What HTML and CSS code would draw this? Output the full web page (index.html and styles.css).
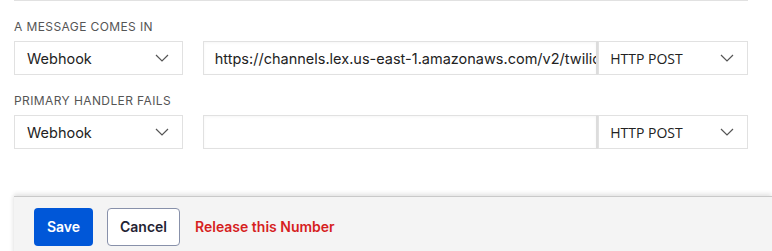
FILE: index.html
```html
<!DOCTYPE html>
<html>
<head>
<meta charset="utf-8">
<link rel="stylesheet" href="styles.css">
</head>
<body>
<div class="page">
  <div class="form">
    <div class="label">A message comes in</div>
    <div class="row">
      <div class="select type">
        <span>Webhook</span>
        <svg class="chev" width="14" height="8" viewBox="0 0 14 8"><path d="M1 1l6 6 6-6" fill="none" stroke="#555" stroke-width="1.2"/></svg>
      </div>
      <input class="input" type="text" value="https://channels.lex.us-east-1.amazonaws.com/v2/twilio/webhook">
      <div class="select method">
        <span>HTTP POST</span>
        <svg class="chev" width="14" height="8" viewBox="0 0 14 8"><path d="M1 1l6 6 6-6" fill="none" stroke="#555" stroke-width="1.2"/></svg>
      </div>
    </div>
    <div class="label">Primary handler fails</div>
    <div class="row">
      <div class="select type">
        <span>Webhook</span>
        <svg class="chev" width="14" height="8" viewBox="0 0 14 8"><path d="M1 1l6 6 6-6" fill="none" stroke="#555" stroke-width="1.2"/></svg>
      </div>
      <input class="input" type="text" value="">
      <div class="select method">
        <span>HTTP POST</span>
        <svg class="chev" width="14" height="8" viewBox="0 0 14 8"><path d="M1 1l6 6 6-6" fill="none" stroke="#555" stroke-width="1.2"/></svg>
      </div>
    </div>
  </div>
  <div class="footer">
    <button class="btn save">Save</button>
    <button class="btn cancel">Cancel</button>
    <a class="release">Release this Number</a>
  </div>
</div>
</body>
</html>
```
FILE: styles.css
```css
html, body {
  margin: 0;
  padding: 0;
  background: #fff;
}
.page {
  width: 772px;
  height: 251px;
  overflow: hidden;
  font-family: Inter, "Noto Sans", sans-serif;
}
.form {
  margin: 0 24px 0 14px;
  border-top: 1px solid #e1e1e1;
  padding-top: 18px;
  height: 177px;
}
.label {
  font-size: 12px;
  line-height: 15px;
  text-transform: uppercase;
  letter-spacing: 0.4px;
  color: #555;
  margin-bottom: 7px;
}
.row {
  display: flex;
  height: 34px;
  margin-bottom: 18px;
}
.select {
  box-sizing: border-box;
  height: 34px;
  border: 1px solid #e1e1e1;
  background: #fff;
  display: flex;
  align-items: center;
  justify-content: space-between;
  color: #222;
  font-size: 14.5px;
}
.select.type {
  width: 169px;
  padding: 0 13px 0 12px;
  margin-right: 20px;
}
.select.method {
  width: 150px;
  padding: 0 13px 0 11px;
  font-family: "Open Sans", sans-serif;
  font-size: 14px;
}
.input {
  box-sizing: border-box;
  width: 396px;
  height: 34px;
  margin: 0;
  border: 1px solid #e1e1e1;
  border-right: 2px solid #dcdcdc;
  border-radius: 0;
  padding: 0 0 0 11px;
  font-family: Inter, "Noto Sans", sans-serif;
  font-size: 14.5px;
  color: #222;
  background: #fff;
  outline: none;
  box-shadow: inset 0 1px 3px rgba(0,0,0,0.04);
}
.chev {
  display: block;
}
.footer {
  margin-left: 14px;
  height: 60px;
  background: #f4f4f4;
  border-top: 1px solid #c9c9c9;
  box-shadow: 0 -3px 4px rgba(0,0,0,0.08), -2px 0 4px rgba(0,0,0,0.05);
  display: flex;
  align-items: center;
  padding-left: 20px;
  box-sizing: border-box;
}
.btn {
  font-family: Inter, sans-serif;
  font-size: 14px;
  font-weight: 600;
  height: 38px;
  border-radius: 4px;
  box-sizing: border-box;
  cursor: pointer;
}
.save {
  width: 59px;
  background: #0057d8;
  color: #fff;
  border: none;
  margin-right: 14px;
}
.cancel {
  width: 73px;
  background: #fff;
  color: #1f2333;
  border: 1px solid #8891aa;
  margin-right: 15px;
}
.release {
  color: #d61f1f;
  font-size: 14px;
  font-weight: 600;
}
```
